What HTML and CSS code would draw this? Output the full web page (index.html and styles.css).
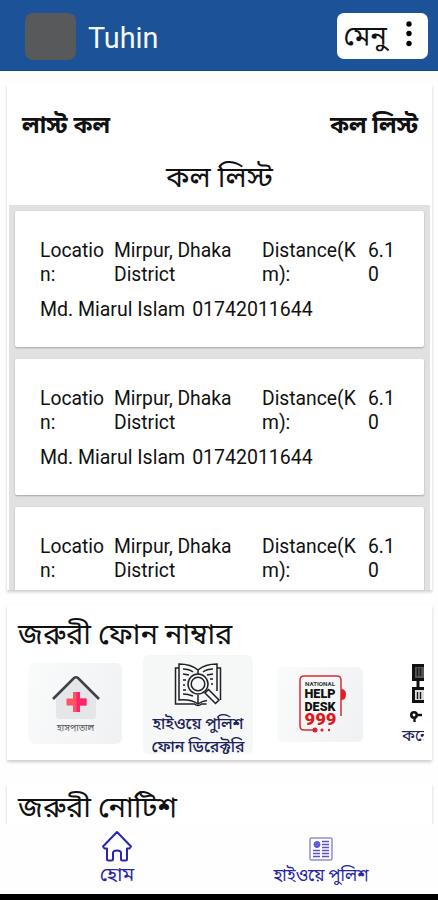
FILE: index.html
```html
<!DOCTYPE html>
<html lang="bn">
<head>
<meta charset="utf-8">
<meta name="viewport" content="width=device-width, initial-scale=1">
<title>Tuhin</title>
<link rel="stylesheet" href="styles.css">
</head>
<body>
<header class="topbar">
  <div class="avatar"></div>
  <h1 class="user">Tuhin</h1>
  <button class="menu"><span>মেনু</span>
    <svg width="8" height="28" viewBox="0 0 8 28"><circle cx="4" cy="4" r="2.7"/><circle cx="4" cy="13.500" r="2.7"/><circle cx="4" cy="23.500" r="2.7"/></svg>
  </button>
</header>
<main class="content">
  <section class="panel calls">
    <div class="tabs"><span>লাস্ট কল</span><span>কল লিস্ট</span></div>
    <h2 class="calls-title">কল লিস্ট</h2>
    <div class="list">
      <article class="call">
        <div class="call-row"><span>Location:</span><span>Mirpur, Dhaka District</span><span>Distance(Km):</span><span>6.10</span></div>
        <div class="caller"><span>Md. Miarul Islam</span><span>01742011644</span></div>
      </article>
      <article class="call">
        <div class="call-row"><span>Location:</span><span>Mirpur, Dhaka District</span><span>Distance(Km):</span><span>6.10</span></div>
        <div class="caller"><span>Md. Miarul Islam</span><span>01742011644</span></div>
      </article>
      <article class="call">
        <div class="call-row"><span>Location:</span><span>Mirpur, Dhaka District</span><span>Distance(Km):</span><span>6.10</span></div>
      </article>
    </div>
  </section>
  <section class="panel phones">
    <h2 class="heading">জরুরী ফোন নাম্বার</h2>
    <div class="tiles">
      <div class="tile hospital">
        <svg width="50" height="46" viewBox="0 0 50 46">
          <path d="M5 22 25 5l20 17v19q0 4-4 4H9q-4 0-4-4z" fill="#e5e6e9"/>
          <path d="M2 25 23 4q2-1.500 4 0l21 21" fill="none" stroke="#414145" stroke-width="2.600"/>
          <path d="M22 18h7v6.500h6.500v7H29V38h-7v-6.500h-6.500v-7H22z" fill="#ff5263"/>
          <path d="M25.500 18H29v6.500h6.500v7H29V38h-3.500z" fill="#f9266c"/>
        </svg>
        <span>হাসপাতাল</span>
      </div>
      <div class="tile directory">
        <svg width="48" height="46" viewBox="0 0 48 46" fill="none" stroke="#202126" stroke-width="1.500">
          <path d="M5 6H1.500v36h19q3.500 3 7 0h5M43 6h3.500v32"/>
          <path d="M24 8Q17 2 5 2v36q12-1 19 4 4-3 9-3.500M24 8Q31 2 43 2v27M24 8v5M24 33v9"/>
          <path d="M9 7q6 0 10 3M9 12l6 1M39 7q-6 0-10 3M39 12l-6 1M9 18h3M9 23h2M9 28h3M9 32q5 0 10 2M36 17h3M37 22h2"/>
          <circle cx="24" cy="22" r="10" fill="#f6f7f7"/><circle cx="24" cy="22" r="6.800"/>
          <path d="m31 31 3.500-3.500 10.500 10.500-3.500 3.500z" fill="#f6f7f7"/>
        </svg>
        <span>হাইওয়ে পুলিশ</span><span>ফোন ডিরেক্টরি</span>
      </div>
      <div class="tile help">
        <svg width="48" height="60" viewBox="0 0 48 60">
          <path d="M43 42V6q0-4-4-4H6Q2 2 2 6v46q0 4 4 4h11" fill="none" stroke="#d92c30" stroke-width="1.500"/>
          <path d="M43 15q5 0 5 5.500t-5 5.500z" fill="#df2027"/>
          <circle cx="17" cy="56" r="2.500" fill="#df2027"/><circle cx="24" cy="56" r="1.600" fill="#df2027"/><circle cx="31" cy="56" r="1.200" fill="#df2027"/>
          <text class="help-small" x="7" y="12" textLength="30" lengthAdjust="spacingAndGlyphs">NATIONAL</text>
          <text class="help-word" x="6.500" y="24" textLength="31" lengthAdjust="spacingAndGlyphs">HELP</text>
          <text class="help-word" x="6.500" y="36.500" textLength="31" lengthAdjust="spacingAndGlyphs">DESK</text>
          <text class="help-number" x="6.500" y="51" textLength="32" lengthAdjust="spacingAndGlyphs">999</text>
        </svg>
      </div>
      <div class="tile control">
        <svg width="36" height="60" viewBox="0 0 36 60">
          <path d="M3.500 2.500h24v14h-24z" fill="#55565a" stroke="#111" stroke-width="3"/>
          <path d="M3.500 25.500h24v13h-24z" fill="#dcdce0" stroke="#111" stroke-width="3"/>
          <path d="M7.500 5v8M10.500 5v8" stroke="#18181b" stroke-width="1.400"/><path d="M7.500 29v7M10.500 29v7" stroke="#18181b" stroke-width="1.400"/>
          <path d="M8 17v8" stroke="#111" stroke-width="3"/>
          <circle cx="4" cy="52" r="2.700" fill="#fff" stroke="#111" stroke-width="2.600"/><path d="M7 52h5M4.500 55v4" stroke="#111" stroke-width="2.300"/>
        </svg>
        <span>কন্ট্রোল</span>
      </div>
    </div>
  </section>
  <section class="panel notice"><h2 class="heading">জরুরী নোটিশ</h2></section>
</main>
<nav class="bottom">
  <a class="nav-home">
    <svg width="32" height="32" viewBox="0 0 32 32" fill="none" stroke="#2726b4" stroke-width="2" stroke-linejoin="round"><path d="M2 16.500 16 2l14 14.500-1.500 2H26V29q0 1.500-1.500 1.500h-3Q20 30.500 20 29v-6q0-2.500-4-2.500T12 23v6q0 1.500-1.500 1.500h-3Q6 30.500 6 29V18.500H3.500z"/></svg>
    <span>হোম</span>
  </a>
  <a class="nav-police">
    <svg width="24" height="24" viewBox="0 0 24 24" fill="none" stroke="#5854c8" stroke-width="1"><rect x="1" y="1" width="22" height="22" rx="1"/><circle cx="8" cy="7.500" r="3" fill="#6260dc"/><path d="M13 4.500h7M13 7.500h7M13 10.500h7M4 13.500h7M13 13.500h7M4 16.500h7M13 16.500h7M4 19.500h7M13 19.500h7" stroke-width="1.400"/></svg>
    <span>হাইওয়ে পুলিশ</span>
  </a>
</nav>
<div class="system"></div>
</body>
</html>
```
FILE: styles.css
```css
* { box-sizing: border-box; }
body { margin: 0; width: 438px; height: 900px; display: flex; flex-direction: column; overflow: hidden; background: #fefefe; color: #111; font-family: Roboto, "Noto Sans Bengali", "Noto Sans", sans-serif; }
h1, h2 { margin: 0; font-weight: 400; white-space: nowrap; }
svg { display: block; flex: none; }
.topbar { height: 71px; flex: none; background: #1c5297; display: flex; align-items: flex-start; padding: 13px 10.500px 0 25px; border-bottom: 1px solid #174a8b; }
.avatar { width: 51px; height: 47px; border-radius: 8px; background: #58595b; }
.user { margin-left: 12px; color: #f5f9ff; font-size: 28.800px; line-height: 50px; }
.menu { margin-left: auto; width: 91px; height: 46px; padding: 0 15px 0 7px; border: 0; border-radius: 7px; background: #fff; display: flex; justify-content: space-between; align-items: center; font-family: inherit; font-size: 27.500px; line-height: 40px; color: #111; white-space: nowrap; }
.menu svg { margin-bottom: 5px; }
.content { height: 753px; flex: none; padding: 13px 6px 0 7px; overflow: hidden; }
.panel { background: #fff; box-shadow: 0 2px 3px #0003; overflow: hidden; }
.calls { height: 506px; padding: 0 2px; }
.tabs { height: 72px; padding: 21px 12px 0 13px; display: flex; justify-content: space-between; font-size: 23.300px; line-height: 41px; font-weight: 700; white-space: nowrap; }
.calls-title { height: 49px; font-size: 29px; line-height: 43px; text-align: center; }
.list { background: #e1e1e1; height: 385px; padding: 6px; display: flex; flex-direction: column; gap: 12.500px; overflow: hidden; }
.call { flex: none; height: 135.500px; padding: 28px 24px 0 25px; border-radius: 2px; background: #fff; box-shadow: 0 1px 2px #0004; font-size: 19.300px; line-height: 24px; }
.call-row { display: grid; grid-template-columns: 67px 141px 99px 32px; column-gap: 7px; height: 48px; word-break: break-word; }
.caller { display: flex; gap: 7px; margin-top: 11px; font-size: 19.500px; white-space: nowrap; }
.phones { margin-top: 15px; height: 155px; }
.heading { padding-left: 11px; font-size: 29px; line-height: 58px; height: 50px; }
.tiles { display: flex; align-items: flex-start; padding-left: 21px; margin-right: 8px; overflow: hidden; }
.tile { flex: none; display: flex; flex-direction: column; align-items: center; border-radius: 6px; background: linear-gradient(110deg, #fafbfb, #eff1f3); white-space: nowrap; }
.hospital { width: 94px; height: 81px; margin-top: 8px; padding: 11px 0 0 1px; font-size: 9px; line-height: 12px; color: #555; }
.hospital span { margin-top: 2px; }
.directory { width: 110px; height: 99px; margin-left: 21px; padding-top: 7px; background: #f6f7f7; color: #202359; font-size: 15.800px; line-height: 23px; font-weight: 500; }
.directory svg { margin-bottom: 4px; }
.help { width: 86px; height: 75px; margin: 12px 0 0 24px; padding: 7px 0 0 3px; }
.help-small { font: 700 6px Roboto; fill: #333; }
.help-word { font: 900 13.500px Roboto; fill: #111; }
.help-number { font: 900 17px Roboto; fill: #df1820; }
.control { width: 80px; margin: 6px 0 0 39px; padding-top: 2px; align-items: flex-start; background: none; color: #202359; font-size: 16px; line-height: 26px; }
.control svg { margin-left: 8px; }
.notice { margin-top: 24px; height: 80px; }
.notice .heading { line-height: 46px; }
.bottom { height: 70px; flex: none; background: #fefefe; color: #2726a9; display: flex; }
.bottom a { display: flex; flex-direction: column; align-items: center; white-space: nowrap; }
.nav-home { width: 234px; padding-top: 6px; font-size: 19.500px; line-height: 26px; }
.nav-police { width: 174px; padding-top: 13px; font-size: 16.700px; line-height: 29px; }
.system { flex: 1; background: #000; }
```
